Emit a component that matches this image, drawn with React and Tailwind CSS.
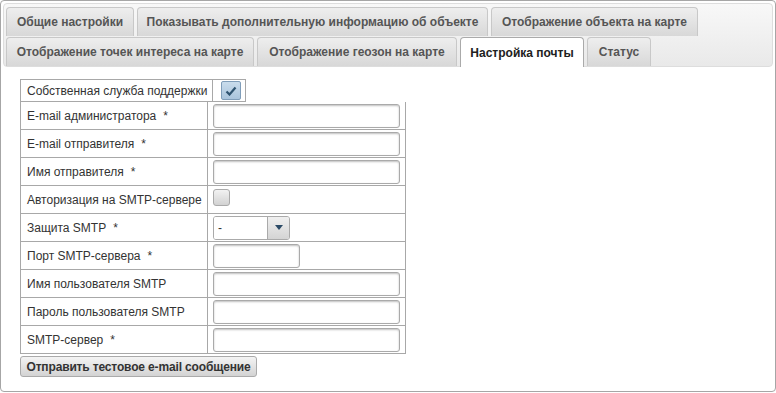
import React from 'react';

const rowOne = [
  { label: 'Общие настройки', w: 'w-[128px]' },
  { label: 'Показывать дополнительную информацию об объекте', w: 'w-[351px]' },
  { label: 'Отображение объекта на карте', w: 'w-[207px]' },
];

const rowTwo = [
  { label: 'Отображение точек интереса на карте', w: 'w-[248px]' },
  { label: 'Отображение геозон на карте', w: 'w-[200px]' },
  { label: 'Настройка почты', w: 'w-[124px]', active: true },
  { label: 'Статус', w: 'w-[64px]' },
];

const Tab = ({ label, w, active }) => (
  <div
    className={
      active
        ? `${w} h-[30px] -mb-px flex items-center justify-center rounded-t-[4px] border border-b-0 border-[#aaaaaa] bg-white font-bold text-[#212121]`
        : `${w} h-[29px] flex items-center justify-center rounded-t-[4px] border border-b-0 border-[#c8c8c8] bg-gradient-to-b from-[#eeeeee] to-[#d8d8d8] font-bold text-[#555555]`
    }
  >
    {label}
  </div>
);

const TextInput = ({ w = 'w-[187px]' }) => (
  <div className={`${w} h-[24px] rounded-[3px] border border-[#aaaaaa] bg-white shadow-[inset_0_1px_2px_rgba(0,0,0,0.25)]`} />
);

// label + required star, star sits a couple of spaces after the text
const Row = ({ label, req, children }) => (
  <div className="flex h-[28px] border-b border-[#a8a8a8]">
    <div className="w-[187px] shrink-0 border-r border-[#a8a8a8] flex items-center pl-[6px] text-[#333333] whitespace-pre">
      {label}
      {req && <span className="ml-[7px]">*</span>}
    </div>
    <div className="flex items-center pl-[5px]">{children}</div>
  </div>
);

const App = () => {
  return (
    <div className="w-[776px] h-[393px] bg-white font-['Liberation_Sans',Arial,sans-serif] text-[12px]">
      <div className="h-[392px] border border-[#a6a6a6] rounded-[4px] p-[2px] flex flex-col">
        <div className="rounded-[4px] border border-[#dddddd] bg-gradient-to-b from-[#f8f8f8] to-[#e9e9e9] pl-[2px] pt-[3px] flex flex-col gap-px">
          <div className="flex gap-[3px]">
            {rowOne.map((t) => (
              <Tab key={t.label} {...t} />
            ))}
          </div>
          <div className="flex gap-[3px]">
            {rowTwo.map((t) => (
              <Tab key={t.label} {...t} />
            ))}
          </div>
        </div>

        <div className="pl-[17px] pt-[12px]">
          <div className="flex w-[226px] h-[23px] border border-[#a8a8a8]">
            <div className="w-[192px] border-r border-[#a8a8a8] flex items-center pl-[6px] text-[#333333]">
              Собственная служба поддержки
            </div>
            <div className="flex items-center pl-[8px]">
              <div className="w-[20px] h-[19px] rounded-[2px] border border-[#7f9db9] bg-gradient-to-b from-[#c9dcec] to-[#a9c4dc] flex items-center justify-center">
                <svg width="12" height="10" viewBox="0 0 12 10">
                  <path d="M1.5 5.5 L4.5 8.5 L10.5 1.5" fill="none" stroke="#2e5370" strokeWidth="2.2" />
                </svg>
              </div>
            </div>
          </div>

          <div className="w-[386px] border-x border-[#a8a8a8]">
            <Row label="E-mail администратора" req><TextInput /></Row>
            <Row label="E-mail отправителя" req><TextInput /></Row>
            <Row label="Имя отправителя" req><TextInput /></Row>
            <Row label="Авторизация на SMTP-сервере">
              <div className="w-[17px] h-[17px] -mt-[5px] rounded-[3px] border border-[#aaaaaa] bg-gradient-to-b from-[#f2f2f2] to-[#d2d2d2]" />
            </Row>
            <Row label="Защита SMTP" req>
              <div className="flex w-[77px] h-[24px] rounded-[3px] border border-[#aaaaaa] overflow-hidden">
                <div className="flex-1 bg-white flex items-center pl-[4px] text-[#333333]">-</div>
                <div className="w-[22px] border-l border-[#aaaaaa] bg-gradient-to-b from-[#f0f0f0] to-[#d4d4d4] flex items-center justify-center">
                  <svg width="8" height="5" viewBox="0 0 8 5">
                    <path d="M0 0 H8 L4 5 Z" fill="#2b4a66" />
                  </svg>
                </div>
              </div>
            </Row>
            <Row label="Порт SMTP-сервера" req><TextInput w="w-[87px]" /></Row>
            <Row label="Имя пользователя SMTP"><TextInput /></Row>
            <Row label="Пароль пользователя SMTP"><TextInput /></Row>
            <Row label="SMTP-сервер" req><TextInput /></Row>
          </div>

          <button className="mt-[2px] w-[237px] h-[21px] rounded-[3px] border border-[#aaaaaa] bg-gradient-to-b from-[#f4f4f4] to-[#d3d3d3] font-bold text-[#333333] text-[12px] tracking-[-0.15px] flex items-center justify-center">
            Отправить тестовое e-mail сообщение
          </button>
        </div>
      </div>
    </div>
  );
};

export default App;
